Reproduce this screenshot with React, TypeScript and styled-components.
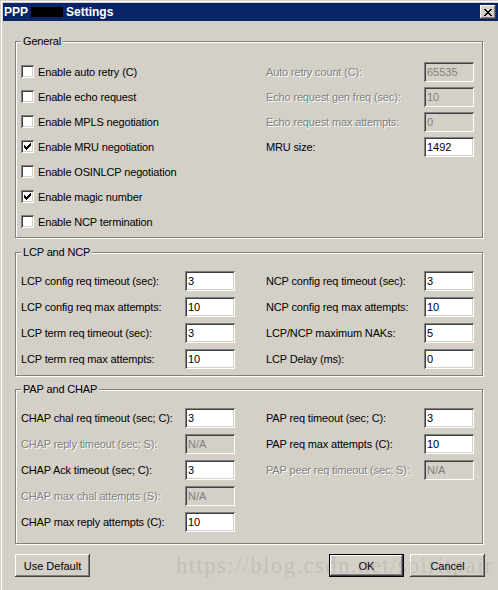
import React from 'react'
import styled, { createGlobalStyle, css } from 'styled-components'

type FieldDef = { label: string; value: string; disabled?: boolean }
type CheckDef = { label: string; checked: boolean }

const general: CheckDef[] = [
  { label: 'Enable auto retry (C)', checked: false },
  { label: 'Enable echo request', checked: false },
  { label: 'Enable MPLS negotiation', checked: false },
  { label: 'Enable MRU negotiation', checked: true },
  { label: 'Enable OSINLCP negotiation', checked: false },
  { label: 'Enable magic number', checked: true },
  { label: 'Enable NCP termination', checked: false },
]

const generalFields: FieldDef[] = [
  { label: 'Auto retry count (C):', value: '65535', disabled: true },
  { label: 'Echo request gen freq (sec):', value: '10', disabled: true },
  { label: 'Echo request max attempts:', value: '0', disabled: true },
  { label: 'MRU size:', value: '1492' },
]

const lcpLeft: FieldDef[] = [
  { label: 'LCP config req timeout (sec):', value: '3' },
  { label: 'LCP config req max attempts:', value: '10' },
  { label: 'LCP term req timeout (sec):', value: '3' },
  { label: 'LCP term req max attempts:', value: '10' },
]

const lcpRight: FieldDef[] = [
  { label: 'NCP config req timeout (sec):', value: '3' },
  { label: 'NCP config req max attempts:', value: '10' },
  { label: 'LCP/NCP maximum NAKs:', value: '5' },
  { label: 'LCP Delay (ms):', value: '0' },
]

const papLeft: FieldDef[] = [
  { label: 'CHAP chal req timeout (sec; C):', value: '3' },
  { label: 'CHAP reply timeout (sec; S):', value: 'N/A', disabled: true },
  { label: 'CHAP Ack timeout (sec; C):', value: '3' },
  { label: 'CHAP max chal attempts (S):', value: 'N/A', disabled: true },
  { label: 'CHAP max reply attempts (C):', value: '10' },
]

const papRight: FieldDef[] = [
  { label: 'PAP req timeout (sec; C):', value: '3' },
  { label: 'PAP req max attempts (C):', value: '10' },
  { label: 'PAP peer req timeout (sec; S):', value: 'N/A', disabled: true },
]

const sunken = css`
  box-shadow: inset 1px 1px 0 #808080, inset -1px -1px 0 #fff,
    inset 2px 2px 0 #404040, inset -2px -2px 0 #d4d0c8;
`

const raised = css`
  box-shadow: inset -1px -1px 0 #404040, inset 1px 1px 0 #fff,
    inset -2px -2px 0 #808080;
`

const GlobalStyle = createGlobalStyle`
  html, body {
    margin: 0;
    padding: 0;
    background: #d4d0c8;
  }
  body {
    font-family: "Liberation Sans", Arial, sans-serif;
    font-size: 11px;
    letter-spacing: -0.15px;
    color: #000;
    overflow: hidden;
  }
`

const Window = styled.div`
  position: relative;
  width: 498px;
  height: 590px;
  box-sizing: border-box;
  padding: 3px 0 0 3px;
  background: #d4d0c8;
  box-shadow: inset 1px 1px 0 #d4d0c8, inset 2px 2px 0 #fff;
  overflow: hidden;
`

const TitleBar = styled.div`
  display: flex;
  align-items: center;
  height: 18px;
  padding-left: 1px;
  background: #0a246a;
`

const Title = styled.div`
  display: flex;
  align-items: center;
  flex: 1;
  color: #fff;
  font-weight: bold;
  font-size: 12px;
  letter-spacing: 0;
`

const Redacted = styled.span`
  display: inline-block;
  width: 32px;
  height: 10px;
  margin: 0 3px;
  background: #000;
`

const CloseButton = styled.div`
  display: flex;
  align-items: center;
  justify-content: center;
  width: 16px;
  height: 14px;
  margin-right: 2px;
  background: #d4d0c8;
  ${raised}
`

const Body = styled.div`
  display: flex;
  flex-direction: column;
  padding: 20px 15px 0 12px;
`

const Group = styled.div<{ $mt: number; $pt: number; $pb: number }>`
  position: relative;
  margin-top: ${(p) => p.$mt}px;
  padding: ${(p) => p.$pt}px 8px ${(p) => p.$pb}px 5px;
  border: 1px solid #808080;
  box-shadow: inset 1px 1px 0 #fff, 1px 1px 0 #fff;
`

const Caption = styled.span`
  position: absolute;
  top: -7px;
  left: 5px;
  padding: 0 2px;
  line-height: 13px;
  background: #d4d0c8;
`

const Grid = styled.div<{ $row: number }>`
  display: grid;
  grid-template-columns: 214px 208px;
  column-gap: 31px;
  grid-auto-rows: ${(p) => p.$row}px;
`

const Field = styled.div`
  display: flex;
  align-items: center;
  justify-content: space-between;
`

const Label = styled.span<{ $disabled?: boolean }>`
  white-space: nowrap;
  color: ${(p) => (p.$disabled ? '#808080' : '#000')};
  text-shadow: ${(p) => (p.$disabled ? '1px 1px 0 #fff' : 'none')};
`

const TextBox = styled.input<{ $disabled?: boolean }>`
  width: 50px;
  height: 20px;
  box-sizing: border-box;
  margin: 0;
  padding: 0 0 0 3px;
  border: none;
  outline: none;
  font: inherit;
  background: ${(p) => (p.$disabled ? '#d4d0c8' : '#fff')};
  color: ${(p) => (p.$disabled ? '#808080' : '#000')};
  ${sunken}
`

const CheckRow = styled.div`
  display: flex;
  align-items: center;
  gap: 4px;
`

const CheckBox = styled.span`
  display: flex;
  align-items: center;
  justify-content: center;
  flex-shrink: 0;
  width: 13px;
  height: 13px;
  box-sizing: border-box;
  background: #fff;
  ${sunken}
`

const ButtonRow = styled.div`
  display: flex;
  gap: 6px;
  margin: 10px -2px 0 0;
`

const Button = styled.button<{ $default?: boolean }>`
  width: 75px;
  height: 23px;
  padding: 0;
  border: none;
  font: inherit;
  color: #000;
  background: #d4d0c8;
  ${(p) =>
    p.$default
      ? css`
          box-shadow: inset 0 0 0 1px #000, inset -2px -2px 0 #404040,
            inset 2px 2px 0 #fff, inset -3px -3px 0 #808080;
        `
      : raised}
`

const Spacer = styled.div`
  flex: 1;
`

const Watermark = styled.div`
  position: absolute;
  left: 176px;
  top: 553px;
  font-family: "Liberation Serif", "Times New Roman", serif;
  font-size: 23px;
  letter-spacing: 1.3px;
  color: rgba(120, 120, 120, 0.2);
  white-space: nowrap;
  pointer-events: none;
`

const checkCols = [2, 3, 4, 3, 2, 1, 0]

const CheckMark = () => (
  <svg width="7" height="7" viewBox="0 0 7 7" shapeRendering="crispEdges">
    {checkCols.map((y, x) => (
      <rect key={x} x={x} y={y} width="1" height="3" fill="#000" />
    ))}
  </svg>
)

const CloseGlyph = () => (
  <svg width="8" height="7" viewBox="0 0 8 7" shapeRendering="crispEdges">
    {[0, 1, 2, 3, 4, 5, 6].map((y) => {
      const a = y <= 3 ? y : 6 - y
      return (
        <g key={y} fill="#000">
          <rect x={a} y={y} width="2" height="1" />
          <rect x={6 - a} y={y} width="2" height="1" />
        </g>
      )
    })}
  </svg>
)

const FieldCell = ({ def }: { def?: FieldDef }) =>
  def ? (
    <Field>
      <Label $disabled={def.disabled}>{def.label}</Label>
      <TextBox readOnly defaultValue={def.value} $disabled={def.disabled} />
    </Field>
  ) : (
    <div />
  )

const pairs = <A, B>(left: A[], right: B[]) =>
  Array.from({ length: Math.max(left.length, right.length) }, (_, i) => [
    left[i],
    right[i],
  ] as const)

export default function App() {
  return (
    <>
      <GlobalStyle />
      <Window>
        <TitleBar>
          <Title>
            PPP<Redacted />Settings
          </Title>
          <CloseButton>
            <CloseGlyph />
          </CloseButton>
        </TitleBar>
        <Body>
          <Group $mt={0} $pt={17} $pb={3}>
            <Caption>General</Caption>
            <Grid $row={25}>
              {pairs(general, generalFields).map(([c, f], i) => (
                <React.Fragment key={i}>
                  <CheckRow>
                    <CheckBox>{c.checked && <CheckMark />}</CheckBox>
                    <Label>{c.label}</Label>
                  </CheckRow>
                  <FieldCell def={f} />
                </React.Fragment>
              ))}
            </Grid>
          </Group>

          <Group $mt={14} $pt={15} $pb={3}>
            <Caption>LCP and NCP</Caption>
            <Grid $row={26}>
              {pairs(lcpLeft, lcpRight).map(([l, r], i) => (
                <React.Fragment key={i}>
                  <FieldCell def={l} />
                  <FieldCell def={r} />
                </React.Fragment>
              ))}
            </Grid>
          </Group>

          <Group $mt={13} $pt={15} $pb={8}>
            <Caption>PAP and CHAP</Caption>
            <Grid $row={26}>
              {pairs(papLeft, papRight).map(([l, r], i) => (
                <React.Fragment key={i}>
                  <FieldCell def={l} />
                  <FieldCell def={r} />
                </React.Fragment>
              ))}
            </Grid>
          </Group>

          <ButtonRow>
            <Button>Use Default</Button>
            <Spacer />
            <Button $default>OK</Button>
            <Button>Cancel</Button>
          </ButtonRow>
        </Body>
        <Watermark>https://blog.csdn.net/spiritpair</Watermark>
      </Window>
    </>
  )
}
